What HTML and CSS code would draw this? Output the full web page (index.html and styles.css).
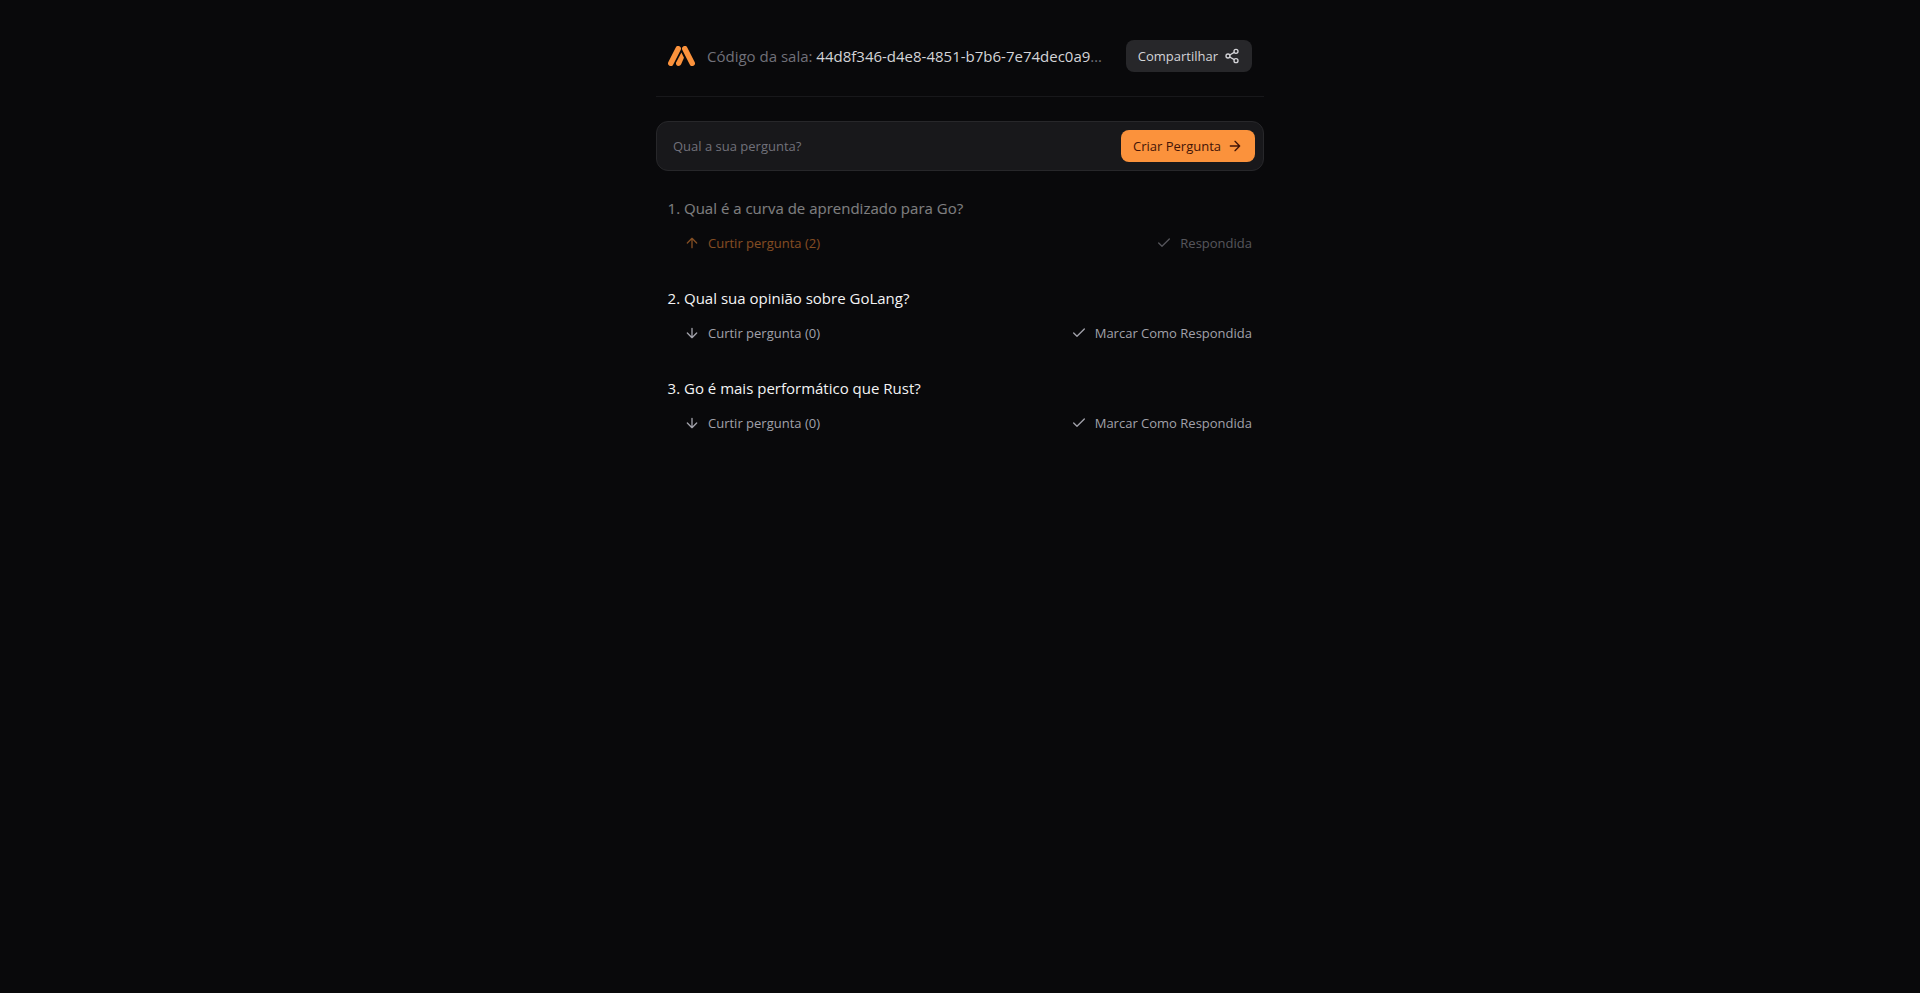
FILE: index.html
```
<!DOCTYPE html>
<html lang="pt-BR">
<head>
<meta charset="utf-8">
<meta name="viewport" content="width=device-width, initial-scale=1">
<title>Sala de perguntas</title>
<link rel="stylesheet" href="styles.css">
</head>
<body>
<svg class="sprite">
  <symbol id="up" viewBox="0 0 24 24"><path d="m5 12 7-7 7 7M12 19V5"/></symbol>
  <symbol id="down" viewBox="0 0 24 24"><path d="M12 5v14M19 12l-7 7-7-7"/></symbol>
  <symbol id="right" viewBox="0 0 24 24"><path d="M5 12h14M12 5l7 7-7 7"/></symbol>
  <symbol id="check" viewBox="0 0 24 24"><path d="M20 6 9 17l-5-5"/></symbol>
  <symbol id="share" viewBox="0 0 24 24"><circle cx="18" cy="5" r="3"/><circle cx="6" cy="12" r="3"/><circle cx="18" cy="19" r="3"/><path d="m8.59 13.51 6.83 3.98M15.41 6.51l-6.82 3.98"/></symbol>
</svg>
<main class="room">
  <header class="room-header">
    <svg class="logo" viewBox="0 0 27 20" role="img" aria-label="AMA">
      <path class="logo-bar" d="M10.2 2.7 2.8 17.3M16.8 2.7 24.2 17.3"/>
      <path class="logo-fill" d="M13.4 6.6 16 11.8 13 18.6Q12.2 20 10.6 20 7.6 19.8 8 16.8Z"/>
    </svg>
    <p class="room-code">Código da sala: <span class="room-id">44d8f346-d4e8-4851-b7b6-7e74dec0a9</span>…</p>
    <button class="button button-share" type="button">Compartilhar <svg class="icon"><use href="#share"/></svg></button>
  </header>
  <hr class="divider">
  <form class="ask">
    <input class="ask-input" type="text" placeholder="Qual a sua pergunta?" aria-label="Qual a sua pergunta?" autocomplete="off">
    <button class="button button-create" type="submit">Criar Pergunta <svg class="icon"><use href="#right"/></svg></button>
  </form>
  <ol class="questions">
    <li class="question answered">
      Qual é a curva de aprendizado para Go?
      <div class="actions">
        <button class="action liked" type="button"><svg class="icon"><use href="#up"/></svg>Curtir pergunta (2)</button>
        <button class="action" type="button" disabled><svg class="icon"><use href="#check"/></svg>Respondida</button>
      </div>
    </li>
    <li class="question">
      Qual sua opinião sobre GoLang?
      <div class="actions">
        <button class="action" type="button"><svg class="icon"><use href="#down"/></svg>Curtir pergunta (0)</button>
        <button class="action" type="button"><svg class="icon"><use href="#check"/></svg>Marcar Como Respondida</button>
      </div>
    </li>
    <li class="question">
      Go é mais performático que Rust?
      <div class="actions">
        <button class="action" type="button"><svg class="icon"><use href="#down"/></svg>Curtir pergunta (0)</button>
        <button class="action" type="button"><svg class="icon"><use href="#check"/></svg>Marcar Como Respondida</button>
      </div>
    </li>
  </ol>
</main>
</body>
</html>
```
FILE: styles.css
```
* { box-sizing: border-box; margin: 0; padding: 0; }
body {
  background: #09090b;
  color: #f4f4f5;
  font: 400 15px/24px "Segoe UI", "Open Sans", "Noto Sans", sans-serif;
}
button, input { font: inherit; border: 0; background: none; color: inherit; }
button { cursor: pointer; }
.sprite { display: none; }
.room {
  max-width: 640px;
  margin: 0 auto;
  padding: 40px 16px;
  display: flex;
  flex-direction: column;
  gap: 24px;
}
.room-header { display: flex; align-items: center; gap: 12px; padding: 0 12px; }
.logo { height: 20px; width: 27px; flex: none; }
.logo-bar { fill: none; stroke: #fb923c; stroke-width: 5.5; stroke-linecap: round; }
.logo-fill { fill: #fb923c; }
.room-code {
  flex: 1;
  min-width: 0;
  overflow: hidden;
  white-space: nowrap;
  text-overflow: ellipsis;
  color: #71717a;
}
.room-id { color: #d4d4d8; font-weight: 500; }
.icon {
  width: 16px;
  height: 16px;
  flex: none;
  fill: none;
  stroke: currentColor;
  stroke-width: 2;
  stroke-linecap: round;
  stroke-linejoin: round;
}
.button {
  display: flex;
  align-items: center;
  flex: none;
  gap: 6px;
  padding: 6px 12px;
  border-radius: 8px;
  font-size: 13px;
  line-height: 20px;
}
.button-share { background: #27272a; color: #d4d4d8; }
.button-create { background: #fb923c; color: #431407; }
.divider { border: 0; height: 1px; background: #18181b; }
.ask {
  display: flex;
  align-items: center;
  gap: 8px;
  padding: 8px;
  border: 1px solid #27272a;
  border-radius: 12px;
  background: #18181b;
}
.ask-input { flex: 1; min-width: 0; padding: 0 8px; font-size: 13px; line-height: 20px; outline: 0; }
.ask-input::placeholder { color: #71717a; opacity: 1; }
.questions { padding: 0 12px; display: flex; flex-direction: column; gap: 32px; }
.question { margin-left: 16px; line-height: 26px; font-weight: 500; }
.answered { opacity: 0.5; }
.actions { display: flex; justify-content: space-between; margin-top: 12px; font-weight: 400; }
.action {
  display: flex;
  align-items: center;
  gap: 8px;
  color: #a1a1aa;
  font-size: 13px;
  line-height: 20px;
}
.liked { color: #fb923c; }
```
